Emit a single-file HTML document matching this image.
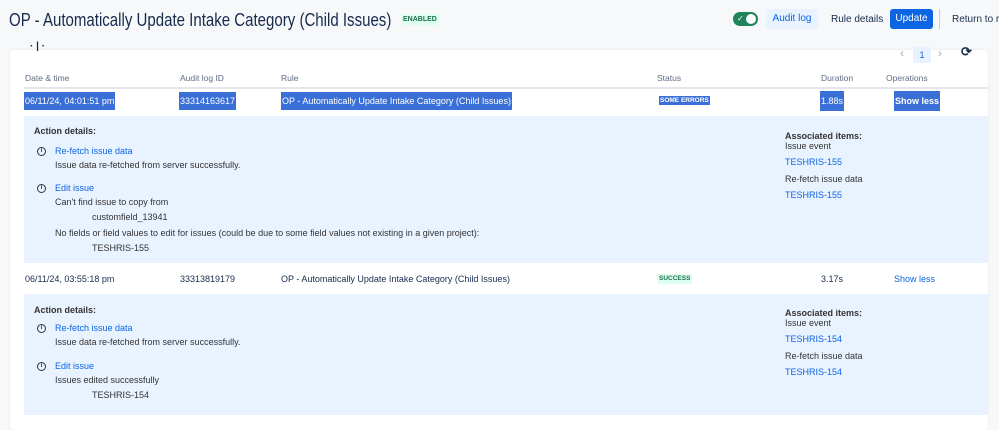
<!DOCTYPE html>
<html><head><style>
*{margin:0;padding:0;box-sizing:border-box}
body{width:999px;height:415px;overflow:hidden;background:#f7f8f9;font-family:"Liberation Sans",sans-serif;color:#172b4d;position:relative;font-size:9px}
.a{position:absolute;white-space:nowrap;line-height:12px}
.card{position:absolute;left:10px;top:50px;width:978px;height:380px;background:#fff;border-radius:4px;box-shadow:0 0 2px rgba(0,0,0,.08)}
.h{color:#5e6c84;font-size:8.5px}
.sel{background:#3a6fd8;color:#fff}
.panel{position:absolute;left:24px;width:964px;background:#e9f2ff}
.lk{color:#0c66e4}
.ic{position:absolute;width:9px;height:9px;border:1.3px solid #333;border-radius:50%;font-size:6px;line-height:6px;text-align:center;font-weight:bold}
</style></head><body>
<div class="a" style="left:9px;top:8px;font-size:18px;line-height:24px;color:#172b4d;transform:scaleX(0.835);transform-origin:left">OP - Automatically Update Intake Category (Child Issues)</div>
<div class="a" style="left:401px;top:14px;height:11px;padding:0 2px;background:#dcfff1;color:#216e4e;font-size:7px;font-weight:bold;line-height:11px">ENABLED</div>
<div class="a" style="left:733px;top:12px;width:25px;height:14px;border-radius:7px;background:#1f845a"><div style="position:absolute;right:2px;top:2px;width:10px;height:10px;border-radius:50%;background:#fff"></div><div style="position:absolute;left:4px;top:1px;color:#fff;font-size:8px">✓</div></div>
<div class="a" style="left:766px;top:9px;width:52px;height:20px;background:#e9f2ff;color:#0c66e4;font-size:10px;line-height:20px;text-align:center;border-radius:3px">Audit log</div>
<div class="a" style="left:831px;top:14px;font-size:10px">Rule details</div>
<div class="a" style="left:890px;top:9px;width:43px;height:20px;background:#0c66e4;color:#fff;font-size:10px;line-height:20px;text-align:center;border-radius:3px">Update</div>
<div class="a" style="left:939px;top:9px;width:1px;height:20px;background:#ccc"></div>
<div class="a" style="left:952px;top:14px;font-size:10px">Return to ru</div>
<div class="card"></div>
<div class="a" style="left:30px;top:41px;font-size:10px;font-weight:bold">· | ·</div>
<div class="a" style="left:900px;top:47px;color:#aaa;font-size:12px">‹</div>
<div class="a" style="left:913px;top:47px;width:18px;height:16px;background:#e9f2ff;color:#0c66e4;text-align:center;line-height:16px;font-size:9px">1</div>
<div class="a" style="left:938px;top:47px;color:#aaa;font-size:12px">›</div>
<div class="a" style="left:961px;top:46px;font-size:13px;font-weight:bold;color:#172b4d">⟳</div>
<div class="a h" style="left:25px;top:72px">Date &amp; time</div>
<div class="a h" style="left:180px;top:72px">Audit log ID</div>
<div class="a h" style="left:281px;top:72px">Rule</div>
<div class="a h" style="left:657px;top:72px">Status</div>
<div class="a h" style="left:821px;top:72px">Duration</div>
<div class="a h" style="left:886px;top:72px">Operations</div>
<div class="a" style="left:24px;top:87px;width:964px;height:2px;background:#e4e6ea"></div>
<div class="a sel" style="left:24px;top:92px;padding:2px 1px;line-height:14px">06/11/24, 04:01:51 pm</div>
<div class="a sel" style="left:179px;top:92px;padding:2px 1px;line-height:14px">33314163617</div>
<div class="a sel" style="left:281px;top:92px;padding:2px 1px;line-height:14px">OP - Automatically Update Intake Category (Child Issues)</div>
<div class="a sel" style="left:659px;top:96px;font-size:6.5px;font-weight:bold;line-height:9px;padding:0 1px">SOME ERRORS</div>
<div class="a sel" style="left:820px;top:91px;padding:3px 1px;line-height:14px">1.88s</div>
<div class="a sel" style="left:894px;top:91px;padding:3px 1px;line-height:14px;font-weight:bold">Show less</div>
<div class="panel" style="top:116px;height:147px"></div>
<div class="a" style="left:34px;top:125px;font-weight:bold;color:#333">Action details:</div>
<div class="ic" style="left:37px;top:147px">i</div>
<div class="a lk" style="left:55px;top:145px">Re-fetch issue data</div>
<div class="a" style="left:55px;top:159px;color:#333">Issue data re-fetched from server successfully.</div>
<div class="ic" style="left:37px;top:184px">i</div>
<div class="a lk" style="left:55px;top:182px">Edit issue</div>
<div class="a" style="left:55px;top:196px;color:#333">Can't find issue to copy from</div>
<div class="a" style="left:92px;top:211px;color:#333">customfield_13941</div>
<div class="a" style="left:55px;top:227px;color:#333">No fields or field values to edit for issues (could be due to some field values not existing in a given project):</div>
<div class="a" style="left:92px;top:242px;color:#333">TESHRIS-155</div>
<div class="a" style="left:785px;top:130px;font-weight:bold;color:#333">Associated items:</div>
<div class="a" style="left:785px;top:140px;color:#333">Issue event</div>
<div class="a lk" style="left:785px;top:156px">TESHRIS-155</div>
<div class="a" style="left:785px;top:173px;color:#333">Re-fetch issue data</div>
<div class="a lk" style="left:785px;top:189px">TESHRIS-155</div>
<div class="a" style="left:25px;top:273px">06/11/24, 03:55:18 pm</div>
<div class="a" style="left:180px;top:273px">33313819179</div>
<div class="a" style="left:281px;top:273px">OP - Automatically Update Intake Category (Child Issues)</div>
<div class="a" style="left:657px;top:274px;height:10px;padding:0 2px;background:#dcfff1;color:#216e4e;font-size:6.5px;font-weight:bold;line-height:10px">SUCCESS</div>
<div class="a" style="left:821px;top:273px">3.17s</div>
<div class="a lk" style="left:894px;top:273px">Show less</div>
<div class="panel" style="top:294px;height:121px"></div>
<div class="a" style="left:34px;top:304px;font-weight:bold;color:#333">Action details:</div>
<div class="ic" style="left:37px;top:324px">i</div>
<div class="a lk" style="left:55px;top:322px">Re-fetch issue data</div>
<div class="a" style="left:55px;top:336px;color:#333">Issue data re-fetched from server successfully.</div>
<div class="ic" style="left:37px;top:362px">i</div>
<div class="a lk" style="left:55px;top:360px">Edit issue</div>
<div class="a" style="left:55px;top:374px;color:#333">Issues edited successfully</div>
<div class="a" style="left:92px;top:389px;color:#333">TESHRIS-154</div>
<div class="a" style="left:785px;top:307px;font-weight:bold;color:#333">Associated items:</div>
<div class="a" style="left:785px;top:317px;color:#333">Issue event</div>
<div class="a lk" style="left:785px;top:333px">TESHRIS-154</div>
<div class="a" style="left:785px;top:350px;color:#333">Re-fetch issue data</div>
<div class="a lk" style="left:785px;top:366px">TESHRIS-154</div>
</body></html>
